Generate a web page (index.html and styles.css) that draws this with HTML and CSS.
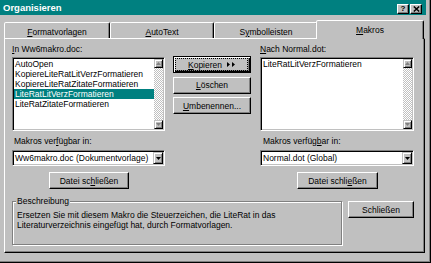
FILE: index.html
```html
<!DOCTYPE html>
<html lang="de">
<head>
<meta charset="utf-8">
<title>Organisieren</title>
<link rel="stylesheet" href="styles.css">
</head>
<body>
<div class="dialog">
  <div class="titlebar">
    <span class="title">Organisieren</span>
    <div class="tb-buttons">
      <span class="tb-btn">?</span>
      <span class="tb-btn"><svg width="7" height="6" viewBox="0 0 7 6"><path d="M0.8 0.5 L6.2 5.5 M6.2 0.5 L0.8 5.5" stroke="#000" stroke-width="1.5"/></svg></span>
    </div>
  </div>
  <div class="tabs">
    <div class="tab tab-first"><u>F</u>ormatvorlagen</div>
    <div class="tab"><u>A</u>utoText</div>
    <div class="tab">S<u>y</u>mbolleisten</div>
    <div class="tab active"><u>M</u>akros</div>
  </div>
  <div class="panel">
    <div class="top">
      <div class="col side">
        <div class="label"><u>I</u>n Ww6makro.doc:</div>
        <div class="listbox">
          <div class="items">
            <div class="item">AutoOpen</div>
            <div class="item">KopiereLiteRatLitVerzFormatieren</div>
            <div class="item">KopiereLiteRatZitateFormatieren</div>
            <div class="item sel">LiteRatLitVerzFormatieren</div>
            <div class="item">LiteRatZitateFormatieren</div>
          </div>
          <div class="vscroll">
            <div class="sb-btn"><svg width="5" height="3" viewBox="0 0 5 3"><path d="M2.5 0 L5 3 L0 3Z" fill="#808080"/></svg></div>
            <div class="sb-track"></div>
            <div class="sb-btn"><svg width="5" height="3" viewBox="0 0 5 3"><path d="M0 0 L5 0 L2.5 3Z" fill="#808080"/></svg></div>
          </div>
        </div>
        <div class="label sub">Makros ver<u>f</u>ügbar in:</div>
        <div class="combo">
          <span class="combo-text">Ww6makro.doc (Dokumentvorlage)</span>
          <span class="combo-btn"><svg width="5" height="3" viewBox="0 0 5 3"><path d="M0 0 L5 0 L2.5 3Z" fill="#000"/></svg></span>
        </div>
        <div class="btn file-btn">Datei sc<u>h</u>ließen</div>
      </div>
      <div class="col middle">
        <div class="btn default"><span><u>K</u>opieren</span><svg class="arrows" width="9" height="5" viewBox="0 0 9 5"><path d="M0 0 L3 2.5 L0 5Z M5 0 L8 2.5 L5 5Z" fill="#000"/></svg></div>
        <div class="btn"><u>L</u>öschen</div>
        <div class="btn"><u>U</u>mbenennen...</div>
      </div>
      <div class="col side right">
        <div class="label"><u>N</u>ach Normal.dot:</div>
        <div class="listbox">
          <div class="items">
            <div class="item">LiteRatLitVerzFormatieren</div>
          </div>
          <div class="vscroll">
            <div class="sb-btn"><svg width="5" height="3" viewBox="0 0 5 3"><path d="M2.5 0 L5 3 L0 3Z" fill="#808080"/></svg></div>
            <div class="sb-track"></div>
            <div class="sb-btn"><svg width="5" height="3" viewBox="0 0 5 3"><path d="M0 0 L5 0 L2.5 3Z" fill="#808080"/></svg></div>
          </div>
        </div>
        <div class="label sub sub-right">Makros verfüg<u>b</u>ar in:</div>
        <div class="combo">
          <span class="combo-text">Normal.dot (Global)</span>
          <span class="combo-btn"><svg width="5" height="3" viewBox="0 0 5 3"><path d="M0 0 L5 0 L2.5 3Z" fill="#000"/></svg></span>
        </div>
        <div class="btn file-btn file-btn-right">Datei schli<u>e</u>ßen</div>
      </div>
    </div>
    <div class="bottom">
      <div class="group">
        <div class="legend">Beschreibung</div>
        <p class="desc">Ersetzen Sie mit diesem Makro die Steuerzeichen, die LiteRat in das<br>Literaturverzeichnis eingefügt hat, durch Formatvorlagen.</p>
      </div>
      <div class="btn close-btn">Schließen</div>
    </div>
  </div>
</div>
</body>
</html>
```
FILE: styles.css
```css
* { box-sizing: border-box; }
html, body { margin: 0; padding: 0; }
body {
  width: 431px;
  height: 263px;
  overflow: hidden;
  background: #c0c0c0;
  font-family: "Liberation Sans", Arial, sans-serif;
  font-size: 8.5px;
  line-height: 10px;
  color: #000;
}
u { text-decoration-thickness: 1px; text-underline-offset: 1px; }

.dialog {
  width: 431px;
  height: 263px;
  background: #c0c0c0;
  padding-right: 4px;
  border-right: 1px solid #000;
  border-bottom: 1px solid #000;
  box-shadow: inset -1px -1px #808080;
}

.titlebar {
  height: 15px;
  background: #008080;
  display: flex;
  align-items: flex-start;
  justify-content: space-between;
  padding: 0 4px 0 3px;
}
.title {
  color: #fff;
  font-weight: bold;
  font-size: 9.5px;
  line-height: 15px;
}
.tb-buttons { display: flex; gap: 1px; margin-top: 4px; }
.tb-btn {
  width: 12px;
  height: 10px;
  background: #c0c0c0;
  border: 1px solid;
  border-color: #fff #000 #000 #fff;
  box-shadow: inset -1px -1px #808080;
  display: flex;
  align-items: center;
  justify-content: center;
  font-weight: bold;
  font-size: 8px;
  line-height: 8px;
}

.tabs {
  display: flex;
  align-items: flex-end;
  height: 23px;
  margin-left: 4px;
}
.tab {
  width: 104px;
  height: 16px;
  border: 1px solid;
  border-bottom: none;
  border-color: #fff #000 transparent #fff;
  border-radius: 2px 2px 0 0;
  box-shadow: inset -1px 0 #808080;
  text-align: center;
  padding-top: 4px;
  white-space: nowrap;
  background: #c0c0c0;
}
.tab-first { width: 106px; }
.tab.active {
  width: 108px;
  height: 19px;
  margin-left: -2px;
  margin-bottom: -1px;
  position: relative;
  z-index: 1;
}

.panel {
  margin-left: 4px;
  width: 421px;
  height: 215px;
  border: 1px solid;
  border-color: #fff #000 #000 #fff;
  box-shadow: inset -1px -1px #808080;
  padding: 5px 0 0 7px;
}

.top { display: flex; }
.col.side { width: 153px; display: flex; flex-direction: column; }
.col.right { width: 154px; margin-left: 9px; }
.col.middle {
  width: 78px;
  margin-left: 8px;
  padding-top: 12px;
  display: flex;
  flex-direction: column;
  gap: 3.5px;
}
.col.middle .btn { height: 17px; }

.label { height: 10px; white-space: nowrap; }
.sub { margin-top: 5px; padding-left: 2px; }
.sub-right { padding-left: 3px; }

.listbox {
  margin-top: 3px;
  height: 74px;
  display: flex;
  border: 1px solid;
  border-color: #808080 #fff #fff #808080;
  box-shadow: inset 1px 1px #000, inset -1px -1px #c0c0c0;
  padding: 1px;
  background: #fff;
}
.items { flex: 1; min-width: 0; }
.item {
  height: 10px;
  padding-left: 1px;
  white-space: nowrap;
  overflow: hidden;
}
.item.sel { background: #008080; color: #fff; }

.vscroll { width: 9px; display: flex; flex-direction: column; }
.sb-btn, .combo-btn {
  background: #c0c0c0;
  border: 1px solid;
  border-color: #c0c0c0 #000 #000 #c0c0c0;
  box-shadow: inset 1px 1px #fff, inset -1px -1px #808080;
  display: flex;
  align-items: center;
  justify-content: center;
}
.sb-btn { height: 9px; }
.sb-track {
  flex: 1;
  background: repeating-conic-gradient(#fff 0 25%, #c0c0c0 0 50%) 0 0 / 2px 2px;
}

.combo {
  margin-top: 4px;
  height: 16px;
  display: flex;
  border: 1px solid;
  border-color: #808080 #fff #fff #808080;
  box-shadow: inset 1px 1px #000, inset -1px -1px #c0c0c0;
  padding: 1px;
  background: #fff;
}
.combo-text { flex: 1; padding-left: 1px; line-height: 12px; white-space: nowrap; overflow: hidden; }
.combo-btn { width: 10px; }

.btn {
  display: flex;
  align-items: center;
  justify-content: center;
  background: #c0c0c0;
  border: 1px solid;
  border-color: #fff #000 #000 #fff;
  box-shadow: inset -1px -1px #808080;
  white-space: nowrap;
}
.btn.default {
  border-color: #000;
  box-shadow: inset 1px 1px #fff, inset -1px -1px #000, inset -2px -2px #808080;
  position: relative;
}
.btn.default::after {
  content: "";
  position: absolute;
  inset: 1px 2px 1px 1px;
  border: 1px dotted #000;
}
.arrows { margin-left: 5px; }

.file-btn { margin-top: 6px; margin-left: 37px; width: 80px; height: 17px; }
.file-btn-right { width: 81px; }

.bottom { display: flex; margin-top: 7px; align-items: flex-start; }
.group {
  margin-top: 5px;
  width: 330px;
  height: 44px;
  border: 1px solid #808080;
  box-shadow: inset 1px 1px #fff, 1px 1px #fff;
  padding: 0 4px;
}
.legend {
  width: fit-content;
  margin-top: -6px;
  margin-left: -1px;
  padding: 0 1px;
  background: #c0c0c0;
  line-height: 10px;
  white-space: nowrap;
}
.desc { margin: 4px 0 0 0; white-space: nowrap; }
.close-btn { margin-left: 6px; margin-top: 5px; width: 66px; height: 17px; }
```
